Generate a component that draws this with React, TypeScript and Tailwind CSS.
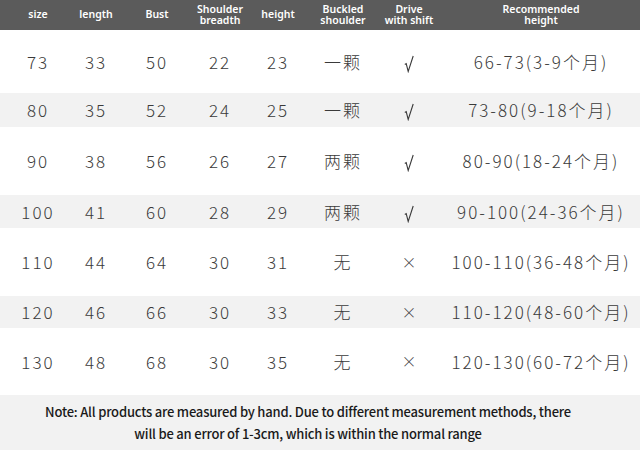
import React from "react";

const cols = "grid grid-cols-[76px_40px_82px_44px_72px_58px_74px_190px]";

const headers: string[][] = [
  ["size"],
  ["length"],
  ["Bust"],
  ["Shoulder", "breadth"],
  ["height"],
  ["Buckled", "shoulder"],
  ["Drive", "with shift"],
  ["Recommended", "height"],
];

const rows: { cells: string[]; h: string; gray: boolean }[] = [
  { cells: ["73", "33", "50", "22", "23", "一颗", "√", "66-73(3-9个月)"], h: "h-[63px]", gray: false },
  { cells: ["80", "35", "52", "24", "25", "一颗", "√", "73-80(9-18个月)"], h: "h-[34px]", gray: true },
  { cells: ["90", "38", "56", "26", "27", "两颗", "√", "80-90(18-24个月)"], h: "h-[68px]", gray: false },
  { cells: ["100", "41", "60", "28", "29", "两颗", "√", "90-100(24-36个月)"], h: "h-[33px]", gray: true },
  { cells: ["110", "44", "64", "30", "31", "无", "×", "100-110(36-48个月)"], h: "h-[68px]", gray: false },
  { cells: ["120", "46", "66", "30", "33", "无", "×", "110-120(48-60个月)"], h: "h-[32px]", gray: true },
  { cells: ["130", "48", "68", "30", "35", "无", "×", "120-130(60-72个月)"], h: "h-[67px]", gray: false },
];

function Check() {
  return (
    <svg width="10" height="18" viewBox="0 0 10 18" className="mt-[4px]" aria-label="√">
      <polyline points="0.8,9.5 2.2,8.6 4.2,16.5 9.2,1" fill="none" stroke="#3a3a3a" strokeWidth="1.1" strokeLinejoin="miter" />
    </svg>
  );
}

export default function App() {
  return (
    <div className="w-[640px] h-[450px] bg-white overflow-hidden font-['Noto_Sans','Noto_Sans_CJK_SC',sans-serif]">
      <div className={`${cols} h-[30px] bg-[#5b5b5b] text-white`}>
        {headers.map((h, i) => (
          <div key={i} className="flex flex-col items-center justify-center whitespace-nowrap text-[10.5px] font-semibold leading-[11px] pb-[1px]">
            {h.map((l, j) => (
              <span key={j}>{l}</span>
            ))}
          </div>
        ))}
      </div>
      {rows.map((r, i) => (
        <div key={i} className={`${cols} ${r.h} ${r.gray ? "bg-[#f2f2f2]" : "bg-white"} text-[#3a3a3a]`}>
          {r.cells.map((c, j) => (
            <div
              key={j}
              className={`flex items-center justify-center whitespace-nowrap font-['Noto_Sans_CJK_SC',sans-serif] font-light ${
                j === 6 ? "text-[15px]" : "text-[17px] tracking-[2px]"
              }`}
            >
              {c === "√" ? <Check /> : c}
            </div>
          ))}
        </div>
      ))}
      <div className="h-[55px] bg-[#f2f2f2] flex flex-col items-center justify-center pr-[24px] text-[#1a1a1a] text-[13px] font-medium leading-[22px] font-['Noto_Sans_CJK_SC',sans-serif] tracking-[-0.2px] pt-[1px]">
        <span>Note: All products are measured by hand. Due to different measurement methods, there</span>
        <span>will be an error of 1-3cm, which is within the normal range</span>
      </div>
    </div>
  );
}
